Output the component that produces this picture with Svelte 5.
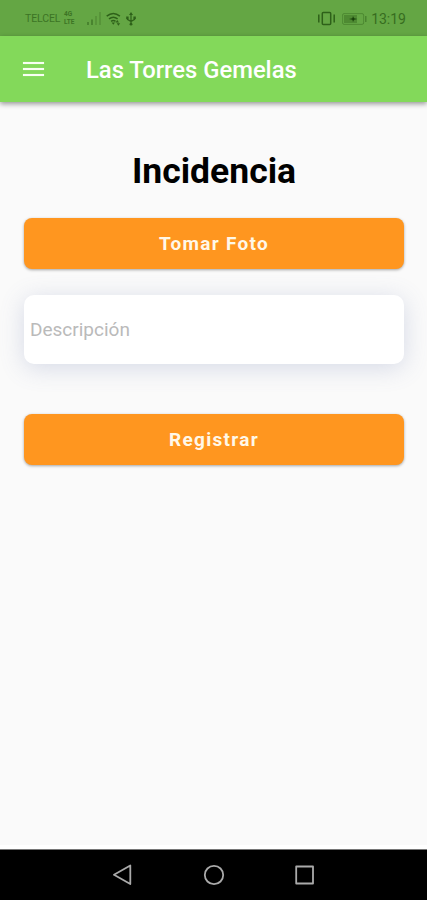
<script lang="ts">
	const carrier = 'TELCEL';
	const time = '13:19';
	const title = 'Las Torres Gemelas';

	let description = $state('');
</script>

<div class="screen">
	<div class="status">
		<div class="status-left">
			<span class="carrier">{carrier}</span>
			<span class="network"><span>4G</span><span>LTE</span></span>
			<svg class="signal" width="14" height="13" viewBox="0 0 14 13">
				<path d="M0 10h2v3H0zM4 7.5h2V13H4z" opacity=".5" />
				<path d="M8 4h2v9H8zM12 0h2v13h-2z" opacity=".25" />
			</svg>
			<svg class="wifi" width="15" height="14" viewBox="0 0 15 14">
				<g fill="none" stroke="currentColor" stroke-width="1.5">
					<path d="M.7 4.1Q7.3-1.3 13.9 4.1M3 6.9q4.3-3.4 8.6 0M5.1 9.3q2.2-1.6 4.4 0" />
				</g>
				<path d="m7.3 12.8-1.7-2.2h3.4zM9.5 10.5l1.8-2.5 1.7 2.5zM10.7 11.3h3.5l-1.8 2.5z" />
			</svg>
			<svg class="usb" width="10" height="14" viewBox="0 0 10 14">
				<path d="M5 0 7 3H3zM.2 4.5h2.4v2.4H.2zM7.4 4.5h2.4v2.4H7.4z" />
				<circle cx="5" cy="12.2" r="1.4" />
				<path d="M5 2v10M1.4 6v1.3L5 9.5l3.6-2.2V6" fill="none" stroke="currentColor" stroke-width="1.2" />
			</svg>
		</div>
		<div class="status-right">
			<svg width="17" height="15" viewBox="0 0 17 15" fill="none" stroke="currentColor" stroke-width="1.5">
				<rect x="4.3" y="1.5" width="8.4" height="12" rx="1" />
				<path d="M.8 3.5v8M16.2 3.5v8" />
			</svg>
			<svg class="battery" width="25" height="12" viewBox="0 0 25 12">
				<rect x=".6" y=".6" width="21" height="10.8" rx="1.5" fill="none" stroke="currentColor" opacity=".4" />
				<path d="M2 2h13v8H2z" opacity=".4" />
				<path d="M23 3h1.5v6H23z" opacity=".5" />
				<path d="m7 6 3.4-.7L11 3l1 2.3 3.4.7-3.4.8L11 9l-.6-2.2z" fill="#17400a" />
			</svg>
			<span class="time">{time}</span>
		</div>
	</div>

	<header>
		<button class="menu" aria-label="Menú">
			<span></span>
			<span></span>
			<span></span>
		</button>
		<span class="title">{title}</span>
	</header>

	<main>
		<h1>Incidencia</h1>
		<button class="action">Tomar Foto</button>
		<input type="text" placeholder="Descripción" bind:value={description} />
		<button class="action">Registrar</button>
	</main>

	<nav>
		<svg width="20" height="22" viewBox="0 0 20 22"><path d="M17.3 1.5v18.5L1 10.8z" /></svg>
		<svg width="22" height="22" viewBox="0 0 22 22"><circle cx="11" cy="11" r="9.2" /></svg>
		<svg width="20" height="20" viewBox="0 0 20 20"><path d="M1.2 1.5h16.8v17H1.2z" /></svg>
	</nav>
</div>

<style>
	:global(body) {
		margin: 0;
	}

	.screen {
		display: flex;
		flex-direction: column;
		height: 900px;
		overflow: hidden;
		background: #fafafa;
		font-family: Roboto, sans-serif;
	}

	button {
		border: none;
		padding: 0;
		font: inherit;
		cursor: pointer;
	}

	.status {
		display: flex;
		justify-content: space-between;
		box-sizing: border-box;
		height: 36px;
		padding: 1px 21px 0 25px;
		background: #64a644;
		color: #2e6119;
	}

	.status svg {
		flex: none;
		fill: currentColor;
	}

	.status-right svg:first-child {
		fill: none;
	}

	.status-left,
	.status-right {
		display: flex;
		align-items: center;
	}

	.carrier {
		width: 38px;
		font-size: 10.5px;
		letter-spacing: -0.1px;
		color: #3c7424;
	}

	.network {
		display: flex;
		flex-direction: column;
		width: 23px;
		padding-left: 1px;
		font-size: 6.5px;
		font-weight: 700;
		line-height: 7.5px;
		color: #3c7424;
	}

	.wifi {
		margin-left: 5px;
	}

	.usb {
		margin-left: 5px;
	}

	.battery {
		margin-left: 7px;
	}

	.time {
		margin-left: 4px;
		font-size: 14px;
		color: #376d20;
	}

	header {
		display: flex;
		align-items: center;
		flex: none;
		height: 66px;
		padding-left: 23px;
		background: #83d95a;
		box-shadow: 0 2px 5px rgba(0, 0, 0, 0.4);
		color: #fff;
	}

	.menu {
		display: flex;
		flex-direction: column;
		gap: 4px;
		width: 21px;
		margin-right: 42px;
		background: none;
	}

	.menu span {
		height: 2px;
		background: #f8fff2;
		box-shadow: 0 0 1px rgba(248, 255, 242, 0.7);
	}

	.title {
		padding-top: 2px;
		font-size: 23.8px;
		font-weight: 500;
	}

	main {
		display: flex;
		flex-direction: column;
		flex: 1;
		padding: 47px 23px 0 24px;
	}

	h1 {
		margin: 0 0 25px;
		font-size: 35.5px;
		font-weight: 700;
		line-height: 44px;
		text-align: center;
		color: #000;
	}

	.action {
		height: 51px;
		border-radius: 8px;
		background: #ff961f;
		box-shadow: 0 1px 3px rgba(0, 0, 0, 0.35);
		font-size: 19px;
		font-weight: 700;
		letter-spacing: 1.3px;
		color: #fff8e8;
	}

	input {
		box-sizing: border-box;
		height: 69px;
		margin: 26px 0 50px;
		border: none;
		border-radius: 10px;
		outline: none;
		padding: 0 6px;
		background: #fff;
		box-shadow: 0 4px 24px rgba(100, 115, 170, 0.24);
		font: 400 19px Roboto, sans-serif;
		letter-spacing: 0;
		color: #333;
	}

	input::placeholder {
		color: #bababa;
		opacity: 1;
	}

	nav {
		display: flex;
		align-items: center;
		justify-content: center;
		gap: 70px;
		box-sizing: border-box;
		height: 51px;
		border-top: 1px solid #777;
		background: #000;
		box-shadow: 0 -4px 0 #fff;
	}

	nav svg {
		fill: none;
		stroke: #aaa;
		stroke-width: 1.8;
		stroke-linejoin: round;
	}
</style>
